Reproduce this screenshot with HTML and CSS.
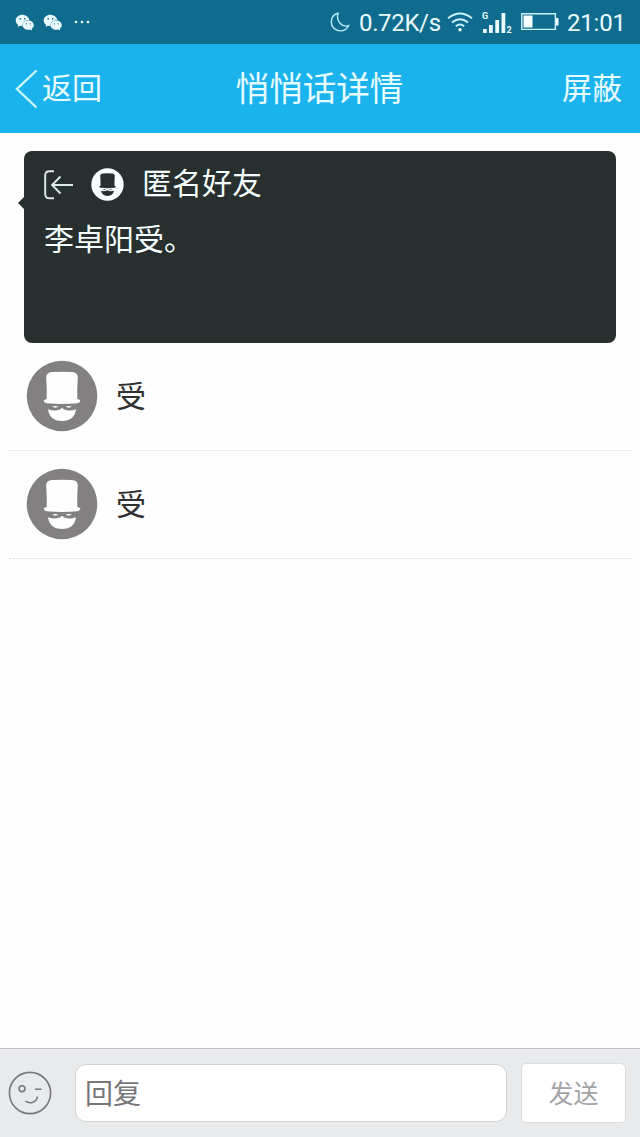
FILE: index.html
```html
<!DOCTYPE html>
<html lang="zh-CN">
<head>
<meta charset="utf-8">
<title>悄悄话详情</title>
<link rel="stylesheet" href="styles.css">
</head>
<body>
<svg class="defs" width="0" height="0">
  <symbol id="wechat" viewBox="0 0 20 17">
    <path fill="currentColor" d="M7.500 .8C3.700.8.7 3.300.7 6.500c0 1.800 1 3.300 2.500 4.400L2.600 13l2.300-1.200c.9.3 1.700.4 2.600.4C7 9 9.500 6 14.400 6 13.500 2.900 11 .8 7.500.8z"/>
    <path fill="currentColor" d="M13.300 6.500c-3.300 0-5.700 2.100-5.700 4.700s2.400 4.600 5.700 4.600c.7 0 1.300-.1 1.900-.3l2 1-.5-1.700c1.300-.9 2.100-2.100 2.100-3.500 0-2.700-2.500-4.800-5.500-4.800z"/>
    <g fill="#106c8e"><circle cx="5.200" cy="4.900" r=".8"/><circle cx="9.700" cy="4.900" r=".8"/><circle cx="11.500" cy="9.800" r=".65"/><circle cx="15.200" cy="9.800" r=".65"/></g>
  </symbol>
  <symbol id="gent" viewBox="0 0 72 72">
    <circle class="disc" cx="36" cy="36" r="35.300"/>
    <path class="shape" d="M20.200 18Q20 12.400 26 12Q36 11.300 46 12Q52 12.400 51.800 18Q51 28 51.300 38.500Q52 40 54.200 39.800Q54.500 42.500 51.500 43.300Q36 44.700 20.500 43.300Q17.500 42.500 17.800 39.800Q20 40 20.700 38.500Q21 28 20.200 18z"/>
    <path class="shape" d="M22 49.300Q27 51 31 50.300Q34.500 49.800 36 47.800Q37.500 49.800 41 50.300Q45 51 50 49.300Q48.500 61 36 61Q23.500 61 22 49.300z"/>
    <path class="shape" d="M26 46.600q3-1.200 6.500 0q-3 2.200-6.500 0zM39.500 46.600q3-1.200 6.500 0q-3.500 2.200-6.500 0z"/>
  </symbol>
</svg>
<div class="screen">
  <div class="status">
    <svg class="wechat"><use href="#wechat"/></svg>
    <svg class="wechat"><use href="#wechat"/></svg>
    <svg class="more" viewBox="0 0 16 4"><g fill="currentColor"><circle cx="2" cy="2" r="1.300"/><circle cx="8" cy="2" r="1.300"/><circle cx="14" cy="2" r="1.300"/></g></svg>
    <svg class="moon" viewBox="0 0 21 21"><path d="M8 1.300C4 2.300 1.300 5.700 1.300 9.900c0 5 4 9 8.900 9 3.600 0 6.800-2 8.300-5.200-6.500 2.100-12.600-4.500-10.500-12.400z"/></svg>
    <span class="speed">0.72K/s</span>
    <svg class="wifi" viewBox="0 0 26 20"><path d="M1 6.200Q13-3.400 25 6.200M5 10.500Q13 4 21 10.500M8.800 14.300Q13 10.800 17.200 14.300"/><circle cx="13" cy="17.700" r="1.700"/></svg>
    <svg class="signal" viewBox="0 0 31 25">
      <path d="M1 19h3.800v4H1zM7 15h3.800v8H7zM13.300 10h3.800v13h-3.800zM19.500 3h3.800v20h-3.800z"/>
      <text x="0" y="9.300" class="net">G</text><text x="24.500" y="23.200" class="net">2</text>
    </svg>
    <svg class="battery" viewBox="0 0 38 18"><path class="case" d="M.8.800h33.600v15.600H.8z"/><path class="fill" d="M2.500 2.500h9v12h-9zM35 5h2.500v7.500H35z"/></svg>
    <span class="clock">21:01</span>
  </div>
  <header class="nav">
    <a class="back"><svg viewBox="0 0 24 40"><path d="M21.500 1.500 2 20l19.500 18.500"/></svg>返回</a>
    <h1 class="title">悄悄话详情</h1>
    <a class="block">屏蔽</a>
  </header>
  <main class="content">
    <section class="card">
      <div class="author">
        <svg class="exit" viewBox="0 0 30 30"><path d="M10 1.300H5.500Q1.200 1.300 1.200 5.500v18.500q0 4.300 4.300 4.300H10M29 15H8M16.500 6.500 8 15l8.500 8.500"/></svg>
        <svg class="avatar small"><use href="#gent"/></svg>
        <span class="name">匿名好友</span>
      </div>
      <p class="message">李卓阳受。</p>
    </section>
    <ul class="comments">
      <li class="comment"><svg class="avatar"><use href="#gent"/></svg><span class="text">受</span></li>
      <li class="comment"><svg class="avatar"><use href="#gent"/></svg><span class="text">受</span></li>
    </ul>
  </main>
  <footer class="reply">
    <svg class="smile" viewBox="0 0 44 44"><circle cx="22" cy="22" r="20.600"/><circle cx="14" cy="17.700" r="2.900"/><path d="M27 18.300h6.500M17.500 30.200Q20.500 32.300 24 31.600Q29 30 29.500 25.500"/></svg>
    <div class="field">回复</div>
    <div class="send">发送</div>
  </footer>
</div>
</body>
</html>
```
FILE: styles.css
```css
* { box-sizing: border-box; }
body {
  margin: 0;
  font-family: "Noto Sans CJK SC", sans-serif;
  font-size: 30px;
}
.defs { position: absolute; }
.screen {
  height: 1137px;
  display: flex;
  flex-direction: column;
  background: #fefefe;
}
.status {
  height: 44px;
  padding: 0 15px;
  display: flex;
  align-items: center;
  background: #106c8e;
  color: #e9fbff;
  font: 24px/44px Roboto, sans-serif;
}
.status svg { flex: none; }
.wechat { width: 20px; height: 17px; margin-right: 8px; }
.more { width: 16px; height: 4px; margin-left: 3px; }
.moon {
  width: 21px;
  height: 21px;
  margin-left: auto;
  fill: none;
  stroke: #bcefff;
  stroke-width: 1.4;
}
.speed, .clock { padding-top: 2px; line-height: 42px; white-space: nowrap; }
.speed { width: 82px; margin-left: 8px; letter-spacing: -.35px; }
.wifi {
  width: 26px;
  height: 20px;
  margin-left: 6px;
  fill: none;
  stroke: #c9f4ff;
  stroke-width: 1.9;
}
.wifi circle { fill: #e9fbff; stroke: none; }
.signal { width: 31px; height: 25px; margin-left: 9px; fill: #e9fbff; }
.net { font: bold 9px Roboto, sans-serif; }
.battery { width: 38px; height: 18px; margin-left: 8px; }
.case { fill: none; stroke: #c9f4ff; stroke-width: 1.4; }
.fill { fill: #f4fdff; }
.clock { width: 58px; margin-left: 8px; letter-spacing: -.2px; }
.nav {
  height: 89px;
  padding: 0 18px 0 15px;
  display: grid;
  grid-template-columns: 1fr auto 1fr;
  align-items: start;
  background: #1bb3ee;
  color: #e6fcff;
  line-height: 84px;
}
.back { display: flex; align-items: flex-start; gap: 3px; }
.back svg {
  width: 24px;
  height: 40px;
  margin-top: 25px;
  fill: none;
  stroke: #c9f8ff;
  stroke-width: 2.4;
}
.title {
  margin: 0;
  padding-left: 2px;
  font-size: 33.6px;
  font-weight: 400;
  line-height: 85px;
}
.block { text-align: right; }
.content { flex: 1; padding: 18px 9px 0; }
.card {
  position: relative;
  height: 192px;
  margin: 0 15px;
  padding: 11px 20px;
  border-radius: 8px;
  background: #272f2f;
  color: #f4fffe;
}
.card::before {
  content: "";
  position: absolute;
  left: -6px;
  top: 46px;
  border: 6px solid transparent;
  border-left: 0;
  border-right-color: #272f2f;
}
.author { display: flex; align-items: center; height: 45px; line-height: 39px; }
.name { height: 45px; }
.exit { width: 30px; height: 30px; fill: none; stroke: #dcebea; stroke-width: 1.9; }
.avatar { width: 72px; height: 72px; flex: none; }
.disc { fill: var(--disc, #838082); }
.shape { fill: var(--shape, #fefefe); }
.small {
  --disc: #f7ffff;
  --shape: #272f2f;
  width: 33px;
  height: 33px;
  margin: 0 18px 0 17px;
}
.message { margin: 8px 0 0; line-height: 45px; }
.comments { margin: 0; padding: 0; list-style: none; color: #303030; }
.comment {
  height: 108.500px;
  padding: 0 17px;
  display: flex;
  align-items: center;
  gap: 18px;
  border-bottom: 1px dotted #dcd2df;
}
.comment:first-child { height: 107.500px; }
.text { height: 48px; line-height: 45px; }
.reply {
  height: 89px;
  padding: 0 14px 1px 8px;
  display: flex;
  align-items: center;
  border-top: 1px solid #bfbfc1;
  background: #e9eaec;
}
.smile { width: 44px; height: 44px; fill: none; stroke: #77787a; stroke-width: 1.6; }
.field {
  width: 432px;
  height: 58px;
  margin: 0 14px 0 23px;
  padding-left: 9px;
  border: 1px solid #d2d3d5;
  border-radius: 11px;
  background: #fff;
  color: #77777a;
  font-size: 28px;
  line-height: 55px;
}
.send {
  width: 105px;
  height: 60px;
  border: 1px solid #dcdddf;
  border-radius: 5px;
  background: #fff;
  color: #a3a3a5;
  font-size: 25px;
  line-height: 56px;
  text-align: center;
}
```
